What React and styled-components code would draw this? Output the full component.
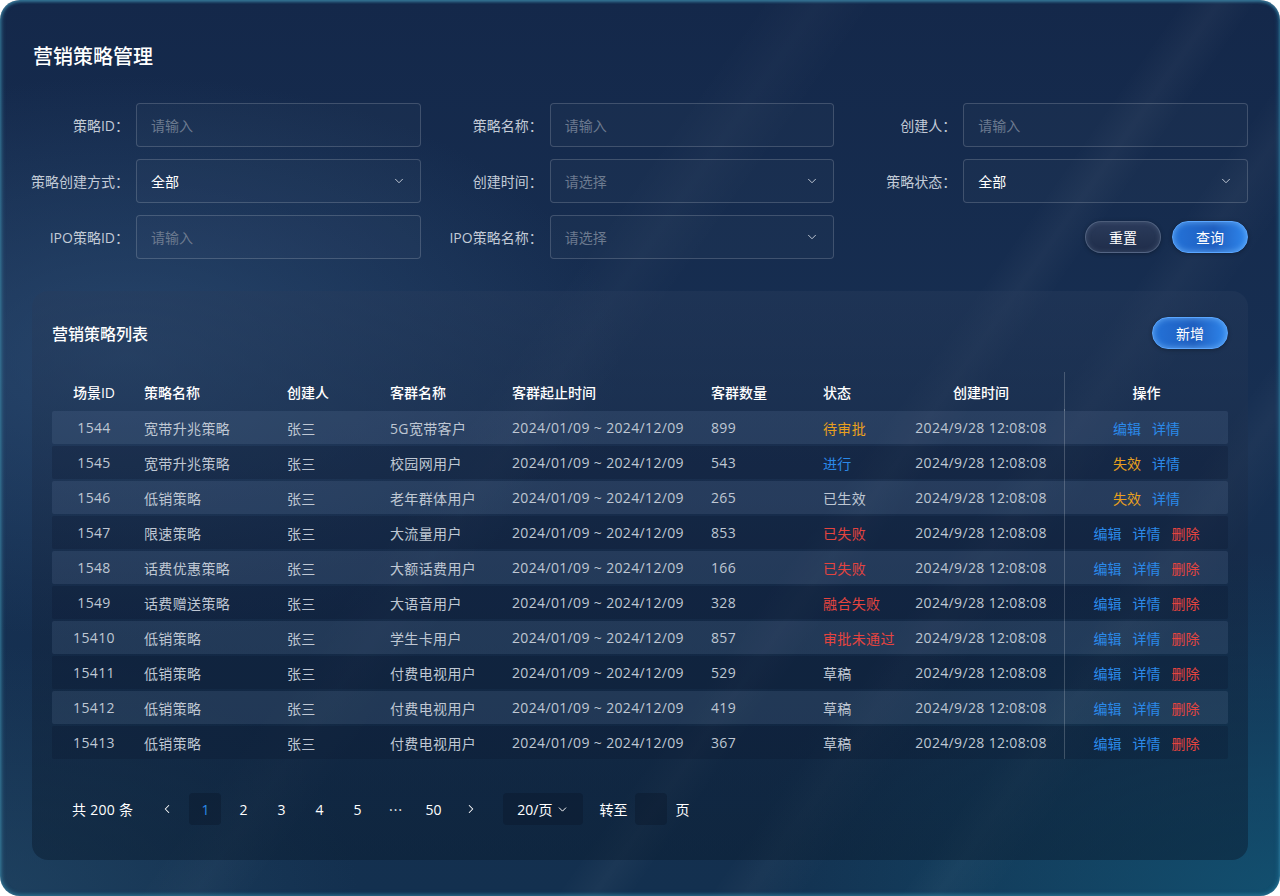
import styled, { createGlobalStyle } from "styled-components";
import { ChevronDown, ChevronLeft, ChevronRight } from "lucide-react";

const GlobalStyle = createGlobalStyle`
  body {
    margin: 0;
    background: #ffffff;
    font-family: "Open Sans", "Noto Sans CJK SC", sans-serif;
  }
  * { box-sizing: border-box; }
`;

const rows = [
  { id: "1544", name: "宽带升兆策略", group: "5G宽带客户", count: "899", status: "待审批", tone: "orange", ops: ["edit", "detail"] },
  { id: "1545", name: "宽带升兆策略", group: "校园网用户", count: "543", status: "进行", tone: "blue", ops: ["invalid", "detail"] },
  { id: "1546", name: "低销策略", group: "老年群体用户", count: "265", status: "已生效", tone: "gray", ops: ["invalid", "detail"] },
  { id: "1547", name: "限速策略", group: "大流量用户", count: "853", status: "已失败", tone: "red", ops: ["edit", "detail", "delete"] },
  { id: "1548", name: "话费优惠策略", group: "大额话费用户", count: "166", status: "已失败", tone: "red", ops: ["edit", "detail", "delete"] },
  { id: "1549", name: "话费赠送策略", group: "大语音用户", count: "328", status: "融合失败", tone: "red", ops: ["edit", "detail", "delete"] },
  { id: "15410", name: "低销策略", group: "学生卡用户", count: "857", status: "审批未通过", tone: "red", ops: ["edit", "detail", "delete"] },
  { id: "15411", name: "低销策略", group: "付费电视用户", count: "529", status: "草稿", tone: "gray", ops: ["edit", "detail", "delete"] },
  { id: "15412", name: "低销策略", group: "付费电视用户", count: "419", status: "草稿", tone: "gray", ops: ["edit", "detail", "delete"] },
  { id: "15413", name: "低销策略", group: "付费电视用户", count: "367", status: "草稿", tone: "gray", ops: ["edit", "detail", "delete"] },
];

const opLabels = {
  edit: { text: "编辑", tone: "blue" },
  detail: { text: "详情", tone: "blue" },
  delete: { text: "删除", tone: "red" },
  invalid: { text: "失效", tone: "orange" },
};

const tones = {
  orange: "#e9a01e",
  blue: "#2b8aea",
  red: "#e5443f",
  gray: "#bfc7d3",
};

const columns = "84px 143px 103px 122px 199px 112px 83px 166px 164px";

const App = () => {
  return (
    <>
      <GlobalStyle />
      <Frame>
        <PageTitle>营销策略管理</PageTitle>

        <FilterGrid>
          <Field>
            <Label>策略ID：</Label>
            <Input placeholder="请输入" />
          </Field>
          <Field>
            <Label>策略名称：</Label>
            <Input placeholder="请输入" />
          </Field>
          <Field>
            <Label>创建人：</Label>
            <Input placeholder="请输入" />
          </Field>

          <Field>
            <Label>策略创建方式：</Label>
            <Select>
              <SelectValue>全部</SelectValue>
              <ChevronDown size={14} strokeWidth={1.6} />
            </Select>
          </Field>
          <Field>
            <Label>创建时间：</Label>
            <Select>
              <SelectValue $placeholder>请选择</SelectValue>
              <ChevronDown size={14} strokeWidth={1.6} />
            </Select>
          </Field>
          <Field>
            <Label>策略状态：</Label>
            <Select>
              <SelectValue>全部</SelectValue>
              <ChevronDown size={14} strokeWidth={1.6} />
            </Select>
          </Field>

          <Field>
            <Label>IPO策略ID：</Label>
            <Input placeholder="请输入" />
          </Field>
          <Field>
            <Label>IPO策略名称：</Label>
            <Select>
              <SelectValue $placeholder>请选择</SelectValue>
              <ChevronDown size={14} strokeWidth={1.6} />
            </Select>
          </Field>
          <Actions>
            <PillButton>重置</PillButton>
            <PillButton $primary>查询</PillButton>
          </Actions>
        </FilterGrid>

        <Card>
          <CardHeader>
            <CardTitle>营销策略列表</CardTitle>
            <PillButton $primary>新增</PillButton>
          </CardHeader>

          <Table>
            <HeadRow>
              <HeadCell $center>场景ID</HeadCell>
              <HeadCell>策略名称</HeadCell>
              <HeadCell>创建人</HeadCell>
              <HeadCell>客群名称</HeadCell>
              <HeadCell>客群起止时间</HeadCell>
              <HeadCell>客群数量</HeadCell>
              <HeadCell>状态</HeadCell>
              <HeadCell $center>创建时间</HeadCell>
              <HeadCell $center $divider>操作</HeadCell>
            </HeadRow>
            <Body>
              {rows.map((r, i) => (
                <Row key={r.id} $odd={i % 2 === 0}>
                  <Cell $center>{r.id}</Cell>
                  <Cell>{r.name}</Cell>
                  <Cell>张三</Cell>
                  <Cell>{r.group}</Cell>
                  <Cell>2024/01/09 ~ 2024/12/09</Cell>
                  <Cell>{r.count}</Cell>
                  <Cell $tone={r.tone}>{r.status}</Cell>
                  <Cell $center>2024/9/28 12:08:08</Cell>
                  <OpsCell>
                    {r.ops.map((o) => (
                      <OpLink key={o} $tone={opLabels[o].tone}>
                        {opLabels[o].text}
                      </OpLink>
                    ))}
                  </OpsCell>
                </Row>
              ))}
            </Body>
          </Table>

          <Pager>
            <Total>共 200 条</Total>
            <PageList>
              <PageItem>
                <ChevronLeft size={14} strokeWidth={1.8} />
              </PageItem>
              <PageItem $active>1</PageItem>
              <PageItem>2</PageItem>
              <PageItem>3</PageItem>
              <PageItem>4</PageItem>
              <PageItem>5</PageItem>
              <PageItem>⋯</PageItem>
              <PageItem>50</PageItem>
              <PageItem>
                <ChevronRight size={14} strokeWidth={1.8} />
              </PageItem>
            </PageList>
            <SizeSelect>
              20/页
              <ChevronDown size={13} strokeWidth={1.8} />
            </SizeSelect>
            <PagerText>转至</PagerText>
            <JumpBox />
            <PagerText>页</PagerText>
          </Pager>
        </Card>
      </Frame>
    </>
  );
};

const Frame = styled.div`
  position: relative;
  width: 1280px;
  height: 896px;
  border-radius: 20px;
  overflow: hidden;
  padding: 43px 32px 0 32px;
  color: #ffffff;
  background:
    linear-gradient(125deg, transparent 62%, rgba(255, 255, 255, 0.035) 64%, transparent 66%),
    linear-gradient(125deg, transparent 70%, rgba(255, 255, 255, 0.03) 72%, transparent 75%),
    linear-gradient(125deg, transparent 40%, rgba(255, 255, 255, 0.025) 43%, transparent 46%),
    linear-gradient(125deg, transparent 80%, rgba(255, 255, 255, 0.03) 82%, transparent 85%),
    radial-gradient(ellipse 55% 45% at 10% 40%, rgba(52, 88, 128, 0.55), transparent 70%),
    radial-gradient(ellipse 60% 55% at 100% 100%, rgba(18, 96, 128, 0.65), transparent 70%),
    radial-gradient(ellipse 40% 40% at 0% 100%, rgba(40, 80, 110, 0.5), transparent 70%),
    linear-gradient(180deg, #14284a 0%, #172f52 45%, #13304f 100%);
  box-shadow:
    inset 0 2px 3px rgba(70, 150, 180, 0.55),
    inset 2px 0 4px rgba(70, 140, 170, 0.45),
    inset -2px 0 4px rgba(40, 120, 160, 0.4),
    inset 0 -2px 4px rgba(40, 130, 160, 0.4);
`;

const PageTitle = styled.h1`
  margin: 0 0 32px 1px;
  font-size: 20px;
  line-height: 28px;
  font-weight: 500;
  color: #ffffff;
`;

const FilterGrid = styled.div`
  display: grid;
  grid-template-columns: repeat(3, 1fr);
  column-gap: 25px;
  row-gap: 12px;
`;

const Field = styled.div`
  display: grid;
  grid-template-columns: 104px 1fr;
  align-items: center;
  height: 44px;
`;

const Label = styled.label`
  display: flex;
  justify-content: flex-end;
  padding-right: 7px;
  white-space: nowrap;
  font-size: 14px;
  color: #c3cbd7;
`;

const Input = styled.input`
  min-width: 0;
  height: 44px;
  padding: 0 14px;
  border: 1px solid rgba(255, 255, 255, 0.17);
  border-radius: 4px;
  background: rgba(255, 255, 255, 0.02);
  color: #ffffff;
  font-family: inherit;
  font-size: 14px;
  outline: none;

  &::placeholder {
    color: #6c7a8f;
  }
`;

const Select = styled.div`
  height: 44px;
  display: flex;
  align-items: center;
  justify-content: space-between;
  padding: 0 14px;
  border: 1px solid rgba(255, 255, 255, 0.17);
  border-radius: 4px;
  background: rgba(255, 255, 255, 0.02);
  color: #c9d1dc;
`;

const SelectValue = styled.span`
  font-size: 14px;
  color: ${(p) => (p.$placeholder ? "#6c7a8f" : "#ffffff")};
`;

const Actions = styled.div`
  display: flex;
  align-items: center;
  justify-content: flex-end;
  gap: 11px;
`;

const PillButton = styled.button`
  width: 76px;
  height: 32px;
  border-radius: 16px;
  font-family: inherit;
  font-size: 14px;
  color: #ffffff;
  cursor: pointer;
  border: 1px solid ${(p) => (p.$primary ? "#5aa6ff" : "rgba(160, 180, 210, 0.35)")};
  background: ${(p) =>
    p.$primary
      ? "linear-gradient(90deg, #2472d8 0%, #1f5fc0 55%, #2f86ec 100%)"
      : "linear-gradient(180deg, #2b3b5b 0%, #1f2d4a 100%)"};
  box-shadow: ${(p) =>
    p.$primary
      ? "inset 0 0 6px rgba(130, 195, 255, 0.7), 0 1px 4px rgba(0, 0, 0, 0.3)"
      : "inset 0 0 5px rgba(150, 170, 200, 0.25), 0 1px 4px rgba(0, 0, 0, 0.3)"};
`;

const Card = styled.section`
  margin-top: 32px;
  width: 1216px;
  height: 569px;
  border-radius: 16px;
  padding: 26px 20px 0 20px;
  background: linear-gradient(
    180deg,
    rgba(40, 60, 92, 0.42) 0%,
    rgba(20, 36, 62, 0.45) 50%,
    rgba(10, 28, 48, 0.5) 100%
  );
`;

const CardHeader = styled.div`
  display: flex;
  align-items: center;
  justify-content: space-between;
  height: 32px;
`;

const CardTitle = styled.h2`
  margin: 0;
  font-size: 16px;
  font-weight: 500;
  color: #ffffff;
`;

const Table = styled.div`
  margin-top: 23px;
  width: 1176px;
`;

const HeadRow = styled.div`
  display: grid;
  grid-template-columns: ${columns};
  height: 39px;
`;

const HeadCell = styled.div`
  display: flex;
  align-items: center;
  justify-content: ${(p) => (p.$center ? "center" : "flex-start")};
  padding-left: ${(p) => (p.$center ? "0" : "8px")};
  font-size: 14px;
  font-weight: 500;
  color: #ffffff;
  border-left: ${(p) => (p.$divider ? "1px solid rgba(255, 255, 255, 0.2)" : "none")};
`;

const Body = styled.div`
  display: flex;
  flex-direction: column;
  gap: 2px;
`;

const Row = styled.div`
  display: grid;
  grid-template-columns: ${columns};
  height: 33px;
  border-radius: 2px;
  background: ${(p) => (p.$odd ? "rgba(120, 145, 180, 0.16)" : "rgba(8, 18, 40, 0.22)")};
`;

const Cell = styled.div`
  display: flex;
  align-items: center;
  justify-content: ${(p) => (p.$center ? "center" : "flex-start")};
  padding-left: ${(p) => (p.$center ? "0" : "8px")};
  font-size: 14px;
  letter-spacing: 0.35px;
  white-space: nowrap;
  color: ${(p) => tones[p.$tone] || "#bfc7d3"};
`;

const OpsCell = styled.div`
  display: flex;
  align-items: center;
  justify-content: center;
  gap: 11px;
  border-left: 1px solid rgba(255, 255, 255, 0.2);
  margin-top: -2px;
  padding-top: 2px;
`;

const OpLink = styled.span`
  font-size: 14px;
  color: ${(p) => tones[p.$tone]};
  cursor: pointer;
`;

const Pager = styled.div`
  margin-top: 34px;
  display: flex;
  align-items: center;
  padding-left: 20px;
  height: 32px;
  font-size: 14px;
  color: #ffffff;
`;

const Total = styled.span`
  margin-right: 18px;
  letter-spacing: 0.3px;
`;

const PageList = styled.div`
  display: flex;
  gap: 6px;
  margin-right: 16px;
`;

const PageItem = styled.div`
  width: 32px;
  height: 32px;
  display: flex;
  align-items: center;
  justify-content: center;
  border-radius: 4px;
  font-size: 14px;
  color: ${(p) => (p.$active ? "#2b8aea" : "#ffffff")};
  background: ${(p) => (p.$active ? "rgba(10, 25, 45, 0.45)" : "transparent")};
`;

const SizeSelect = styled.div`
  width: 80px;
  height: 32px;
  display: flex;
  align-items: center;
  justify-content: center;
  gap: 4px;
  border-radius: 4px;
  background: rgba(10, 25, 45, 0.45);
  margin-right: 16px;
`;

const PagerText = styled.span`
  font-size: 14px;
  color: #ffffff;
`;

const JumpBox = styled.div`
  width: 32px;
  height: 32px;
  margin: 0 8px;
  border-radius: 4px;
  background: rgba(10, 25, 45, 0.45);
`;

export default App;
